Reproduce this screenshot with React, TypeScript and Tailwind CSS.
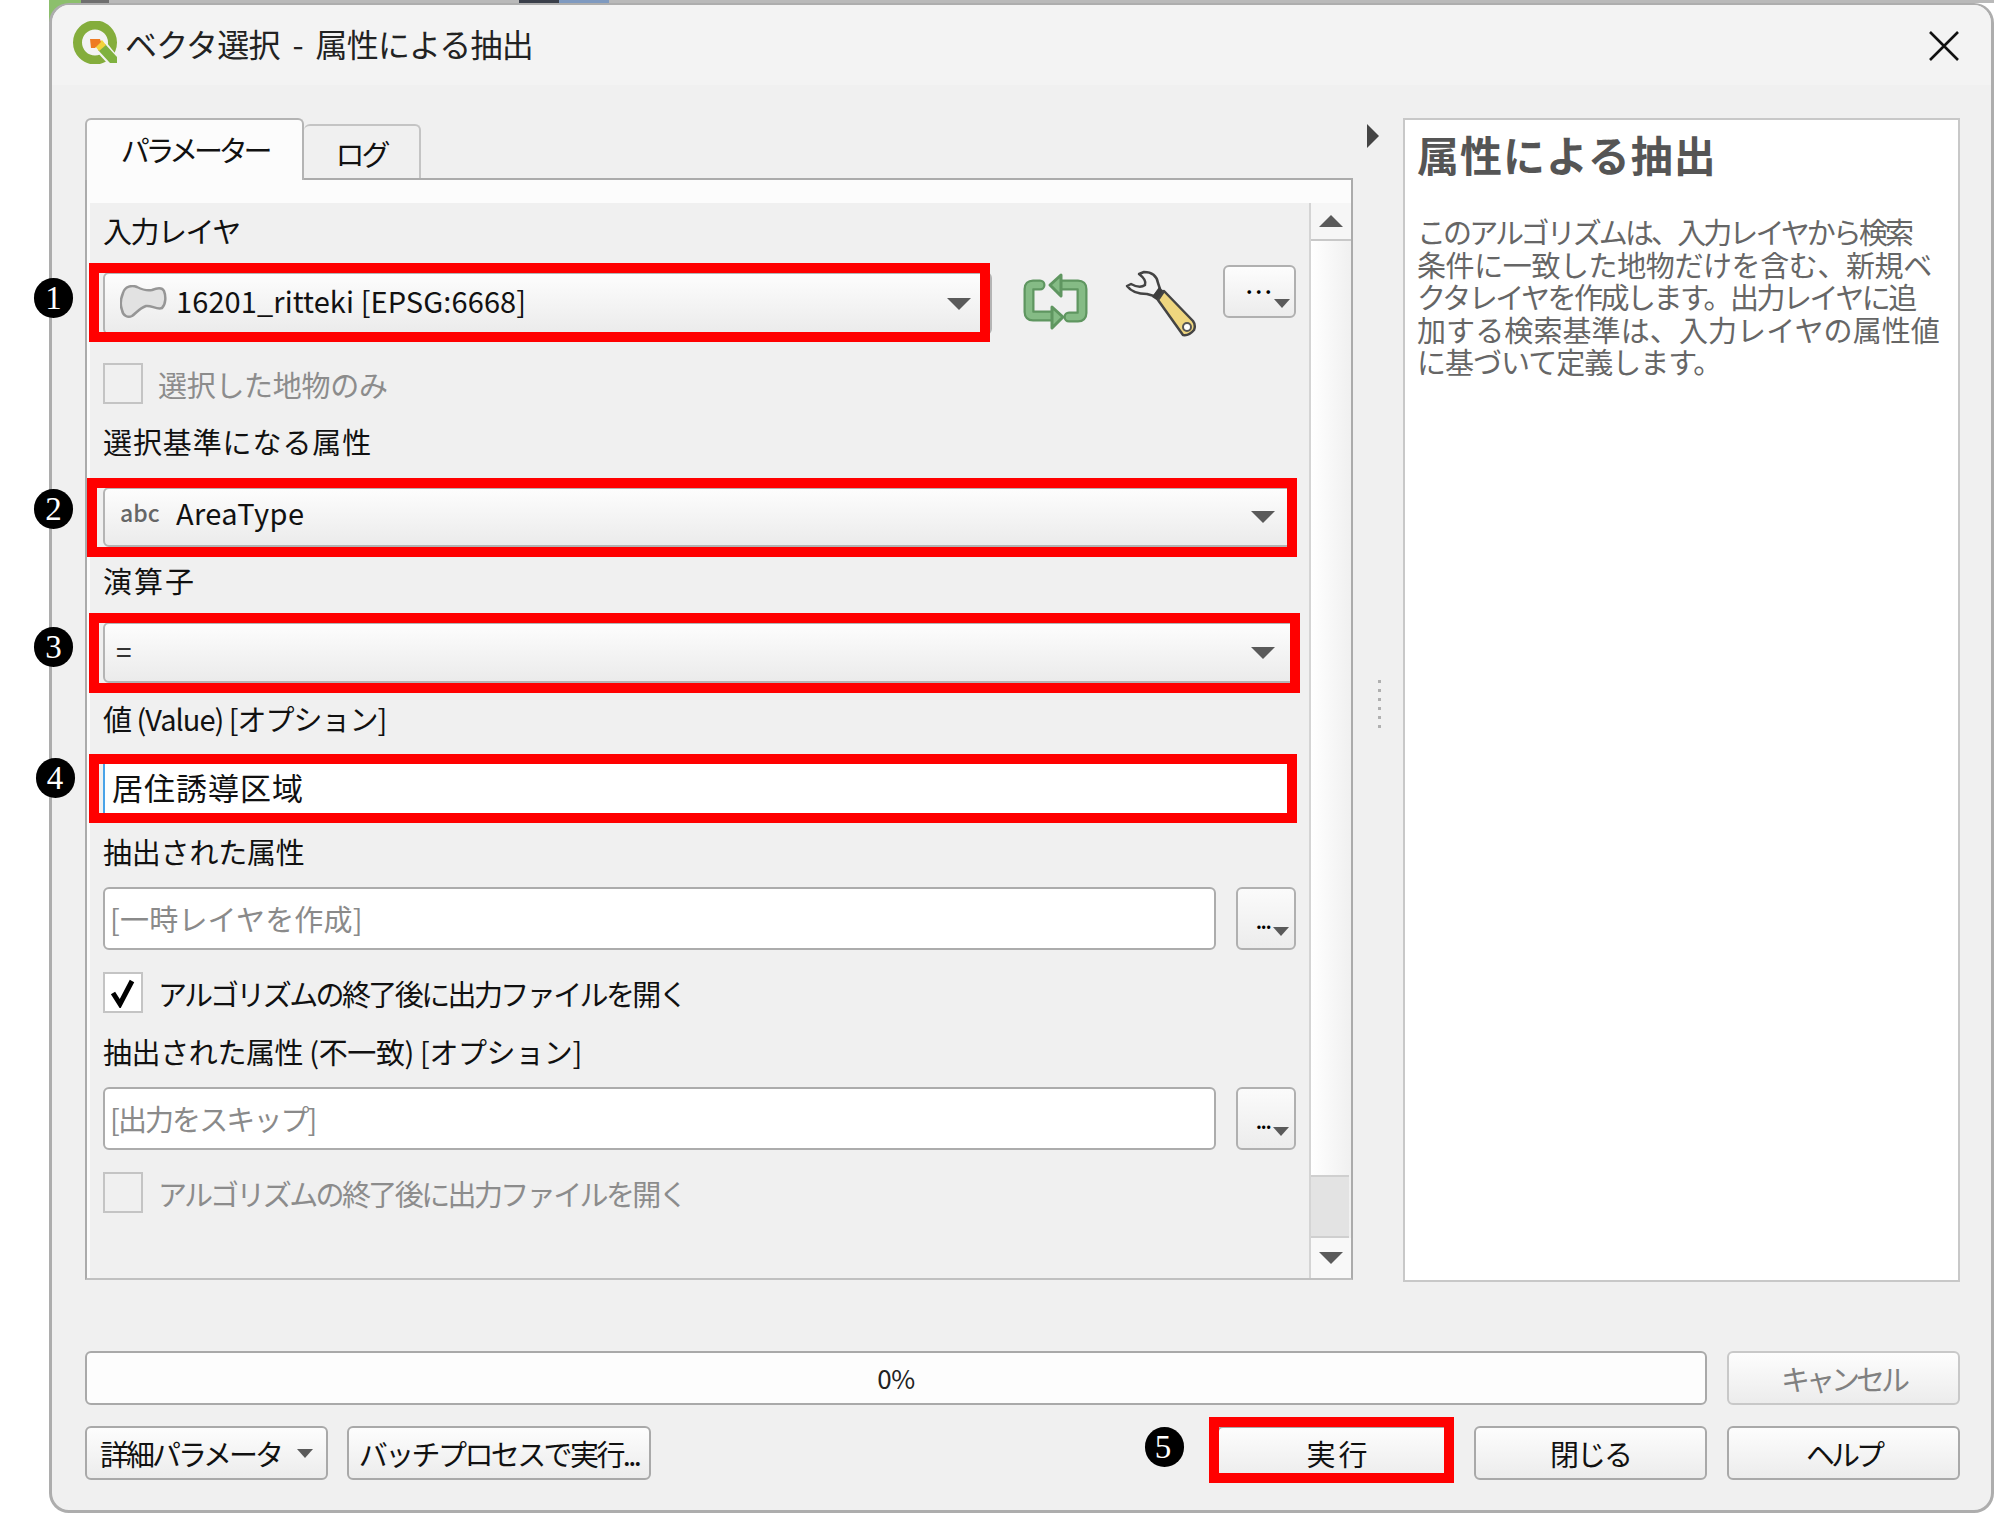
import type { ReactNode } from 'react';

const cjk = "font-['Noto_Sans_CJK_JP','Noto_Sans',sans-serif]";

function Mark({ className }: { className: string }) {
  return <div className={`absolute border-[10px] border-[#ff0000] pointer-events-none ${className}`} />;
}

function Badge({ n, className }: { n: number; className: string }) {
  return (
    <div
      className={`absolute flex h-[40px] w-[39px] items-center justify-center rounded-full bg-black font-['Liberation_Serif',serif] text-[33px] leading-none text-white ${className}`}
    >
      {n}
    </div>
  );
}

function Arrow({ className = 'border-x-[12px] border-t-[12px]' }: { className?: string }) {
  return <span className={`inline-block h-0 w-0 border-x-transparent border-t-[#5a5a5a] ${className}`} />;
}

function Combo({ className, children }: { className: string; children: ReactNode }) {
  return (
    <div
      className={`relative flex items-center justify-between rounded-[6px] border-2 border-[#b4b4b4] bg-linear-to-b from-[#fdfdfd] to-[#ebebeb] pr-[19px] ${className}`}
    >
      {children}
    </div>
  );
}

function Label({ children, className = '' }: { children: ReactNode; className?: string }) {
  return <div className={`h-[36px] text-[29px] leading-[32px] whitespace-nowrap text-[#111] ${className}`}>{children}</div>;
}

function Check({ checked, children, className, textClass }: { checked?: boolean; children: string; className: string; textClass: string }) {
  return (
    <div className={`flex h-[41px] items-center ${className}`}>
      <div
        className={`flex h-[41px] w-[40px] shrink-0 items-center justify-center border-2 border-[#c4c4c4] ${checked ? 'bg-white' : 'bg-[#f0f0f0]'}`}
      >
        {checked && (
          <svg width="26" height="30" viewBox="0 0 26 30">
            <path d="M3 15 L10 26 L22 3" fill="none" stroke="#000" strokeWidth="5" />
          </svg>
        )}
      </div>
      <div className={`ml-[15px] text-[29px] leading-[36px] whitespace-nowrap ${checked ? 'text-[#111]' : 'text-[#8c8c8c]'} ${textClass}`}>
        {children}
      </div>
    </div>
  );
}

function OutputRow({ placeholder, className }: { placeholder: string; className: string }) {
  return (
    <div className={`flex h-[63px] ${className}`}>
      <div className="flex w-[1113px] items-center rounded-[6px] border-2 border-[#acacac] bg-white pl-[5px] text-[29px] text-[#8a8a8a]">
        {placeholder}
      </div>
      <button className="relative ml-[20px] h-[63px] w-[60px] rounded-[6px] border-2 border-[#b0b0b0] bg-linear-to-b from-[#fbfbfb] to-[#ececec]">
        <span className="absolute top-[28px] left-[18px] text-[18px] leading-[8px] font-bold tracking-[-1px] text-black">...</span>
        <span className="absolute right-[5px] bottom-[12px] flex">
          <Arrow className="border-x-[8px] border-t-[9px]" />
        </span>
      </button>
    </div>
  );
}

function Btn({ children, className = '' }: { children: ReactNode; className?: string }) {
  return (
    <button
      className={`relative flex h-[54px] shrink-0 items-center justify-center rounded-[6px] border-2 border-[#a9a9a9] bg-linear-to-b from-[#fdfdfd] to-[#ececec] text-[29px] leading-none text-[#111] ${className}`}
    >
      {children}
    </button>
  );
}

function QgisLogo() {
  return (
    <svg width="47" height="43" viewBox="0 0 47 43" className="-mt-[5px] shrink-0">
      <circle cx="24" cy="21.5" r="17.5" fill="none" stroke="#84ad3c" strokeWidth="9" />
      <path d="M25 19 L36 22 L47 36 L47 43 L37 43 L26 31 Z" fill="#f3f3f3" />
      <path d="M27 29 L34 23 L46 36 L46 42 L39 42 Z" fill="#7fb13f" />
      <path d="M24 25 L31 19 L35 24 L28 30 Z" fill="#f3d23c" />
      <path d="M19 18 L29 18 L30 21 L24 27 L20 27 Z" fill="#ee7b22" />
    </svg>
  );
}

function ReloadIcon() {
  return (
    <svg width="66" height="58" viewBox="0 0 66 58" className="shrink-0">
      <g fill="none" strokeLinecap="round" strokeLinejoin="round">
        <path d="M17 12 H10 Q6 12 6 16 V39 Q6 43 10 43 H30" stroke="#5f9660" strokeWidth="11" />
        <path d="M46 44 H55 Q59 44 59 40 V16 Q59 12 55 12 H36" stroke="#5f9660" strokeWidth="11" />
        <path d="M17 12 H10 Q6 12 6 16 V39 Q6 43 10 43 H30" stroke="#85bb85" strokeWidth="6.5" />
        <path d="M46 44 H55 Q59 44 59 40 V16 Q59 12 55 12 H36" stroke="#85bb85" strokeWidth="6.5" />
      </g>
      <path d="M29 34 L40 44 L29 55 Z" fill="#85bb85" stroke="#5f9660" strokeWidth="3" strokeLinejoin="round" />
      <path d="M38 2 L27 12 L38 23 Z" fill="#85bb85" stroke="#5f9660" strokeWidth="3" strokeLinejoin="round" />
    </svg>
  );
}

function WrenchIcon() {
  return (
    <svg width="72" height="67" viewBox="0 0 72 67" className="shrink-0">
      <path
        d="M19 2 Q31 2 33 13 L35 19 L29 26 L22 24 Q8 24 2 16 L6 14 Q15 19 20 15 Q22 10 14 4 Z"
        fill="#f2f2f2"
        stroke="#444"
        strokeWidth="2.5"
        strokeLinejoin="round"
      />
      <path d="M34 17 L27 27 L33 31 L40 22 Z" fill="#3d3d3d" />
      <path d="M39 21 L33 30 L58 65 Q64 66 69 60 Q71 55 68 51 Z" fill="#efd67f" stroke="#444" strokeWidth="2.5" strokeLinejoin="round" />
      <circle cx="62" cy="57" r="4" fill="#fff" stroke="#555" strokeWidth="2" />
    </svg>
  );
}

function LayerIcon() {
  return (
    <svg width="47" height="34" viewBox="0 0 47 34" className="-mt-[3px] shrink-0">
      <path
        d="M3 8 C5 1 12 0 17 2 C23 5 27 6 32 5 C37 3 42 2 44 6 C46 11 46 19 42 23 C37 25 31 20 26 21 C20 23 16 28 12 31 C8 33 3 31 2 25 C0 20 1 13 3 8 Z"
        fill="#e2e2e2"
        stroke="#969696"
        strokeWidth="2.5"
        strokeLinejoin="round"
      />
    </svg>
  );
}

export default function App() {
  return (
    <div className={`h-[1515px] w-[1995px] overflow-hidden bg-white ${cjk}`}>
      {/* map behind the dialog */}
      <div className="ml-[49px] flex h-[3px] w-[1945px] bg-[#b9b9b9]">
        <div className="h-[22px] w-[32px] bg-[#8cbf6c]" />
        <div className="w-[28px] bg-[#6f6f6f]" />
        <div className="ml-[410px] w-[40px] bg-[#3a3f4a]" />
        <div className="w-[50px] bg-[#7f9ac0]" />
      </div>

      <div className="relative ml-[49px] flex h-[1510px] w-[1945px] flex-col rounded-[20px] border-[3px] border-t-2 border-[#adadad] bg-[#f0f0f0]">
        {/* title bar */}
        <div className="flex h-[80px] shrink-0 items-center rounded-t-[18px] bg-[#f3f3f3] pr-[31px] pl-[19px]">
          <QgisLogo />
          <div className="-mt-[4px] ml-[7px] text-[32px] leading-none tracking-[-0.8px] whitespace-pre text-[#222]">ベクタ選択  -  属性による抽出</div>
          <svg width="32" height="32" viewBox="0 0 32 32" className="mt-[2px] ml-auto">
            <path d="M2 2 L30 30 M30 2 L2 30" stroke="#111" strokeWidth="2.6" />
          </svg>
        </div>

        <div className="flex flex-1 flex-col pr-[31px] pl-[33px]">
          <div className="mt-[33px] flex h-[1164px]">
            {/* parameters */}
            <div className="flex w-[1268px] shrink-0 flex-col">
              <div className="flex h-[60px] items-end">
                <div className="z-10 -mb-[2px] flex h-[62px] w-[219px] items-center justify-center rounded-t-[6px] border-2 border-b-0 border-[#b4b4b4] bg-[#fcfcfc] text-[29px] tracking-[-4.3px] text-[#111]">
                  パラメーター
                </div>
                <div className="flex h-[54px] w-[117px] items-center justify-center rounded-t-[6px] border-2 border-b-0 border-l-0 border-[#c4c4c4] bg-[#f0f0f0] pt-[4px] text-[29px] tracking-[-3px] text-[#111]">
                  ログ
                </div>
              </div>
              <div className="flex h-[1102px] border-2 border-[#ababab] border-b-[#c0c0c0] bg-[#fcfcfc] pl-[3px]">
                <div className="mt-[23px] flex w-[1219px] flex-col bg-[#f0f0f0] pr-[13px] pl-[13px]">
                  <Label className="mt-[11px] tracking-[-1.5px]">入力レイヤ</Label>

                  <div className="mt-[15px] flex h-[72px]">
                    <Combo className="mt-[7px] h-[63px] w-[889px]">
                      <div className="flex items-center pl-[15px]">
                        <LayerIcon />
                        <span className="-mt-[5px] ml-[9px] text-[29px] tracking-[0.1px] text-[#111]">16201_ritteki [EPSG:6668]</span>
                      </div>
                      <Arrow />
                      <Mark className="-top-[11px] right-0 -bottom-[9px] -left-[16px]" />
                      <Badge n={1} className="top-[4px] -left-[71px]" />
                    </Combo>
                    <div className="mt-[8px] ml-[31px]">
                      <ReloadIcon />
                    </div>
                    <div className="mt-[5px] ml-[36px]">
                      <WrenchIcon />
                    </div>
                    <button className="relative ml-[26px] h-[53px] w-[73px] rounded-[6px] border-2 border-[#b0b0b0] bg-linear-to-b from-[#fdfdfd] to-[#ececec]">
                      <span className="absolute top-[14px] left-[21px] text-[20px] leading-[10px] font-bold tracking-[3px] text-black">...</span>
                      <span className="absolute right-[4px] bottom-[8px] flex">
                        <Arrow className="border-x-[8px] border-t-[9px]" />
                      </span>
                    </button>
                  </div>

                  <Check className="mt-[26px]" textClass="tracking-[-0.3px]">選択した地物のみ</Check>

                  <Label className="mt-[21px] tracking-[0.9px]">選択基準になる属性</Label>
                  <Combo className="mt-[26px] h-[60px] w-[1193px]">
                    <div className="-mt-[9px] flex items-center pl-[15px]">
                      <span className="w-[56px] text-[23px] font-medium text-[#666]">abc</span>
                      <span className="text-[29px] tracking-[0.4px] text-[#111]">AreaType</span>
                    </div>
                    <Arrow />
                    <Mark className="-top-[11px] -right-[3px] -bottom-[12px] -left-[18px]" />
                    <Badge n={2} className="-left-[71px] top-0" />
                  </Combo>

                  <Label className="mt-[17px] tracking-[2px]">演算子</Label>
                  <Combo className="mt-[22px] h-[61px] w-[1193px]">
                    <span className="-mt-[3px] pl-[11px] text-[28px] text-[#333]">=</span>
                    <Arrow />
                    <Mark className="-top-[11px] -right-[6px] -bottom-[12px] -left-[16px]" />
                    <Badge n={3} className="top-[3px] -left-[71px]" />
                  </Combo>

                  <Label className="mt-[19px] tracking-[-1px]">値 (Value) [オプション]</Label>
                  <div className="relative mt-[25px] flex h-[50px] w-[1193px] items-center border-l-2 border-[#4aa3e8] bg-white pl-[7px] text-[31px] tracking-[1px] text-[#111]">
                    <span className="-mt-[2px]">居住誘導区域</span>
                    <Mark className="-top-[9px] -right-[1px] -bottom-[10px] -left-[16px]" />
                    <Badge n={4} className="-top-[5px] -left-[69px]" />
                  </div>

                  <Label className="mt-[22px] tracking-[-0.2px]">抽出された属性</Label>
                  <OutputRow className="mt-[16px] tracking-[0.2px]" placeholder="[一時レイヤを作成]" />
                  <Check checked className="mt-[22px]" textClass="tracking-[-2.6px]">アルゴリズムの終了後に出力ファイルを開く</Check>
                  <Label className="mt-[22px] tracking-[-0.4px]">抽出された属性 (不一致) [オプション]</Label>
                  <OutputRow className="mt-[16px] tracking-[-1.9px]" placeholder="[出力をスキップ]" />
                  <Check className="mt-[22px]" textClass="tracking-[-2.6px]">アルゴリズムの終了後に出力ファイルを開く</Check>
                </div>

                {/* scroll bar */}
                <div className="mt-[23px] flex w-[42px] flex-col border-l-2 border-[#d4d4d4] bg-linear-to-r from-[#ffffff] to-[#f0f0f0]">
                  <div className="flex h-[38px] items-center justify-center border-b-2 border-[#c8c8c8] bg-[#f6f6f6]">
                    <span className="h-0 w-0 border-x-[12px] border-b-[12px] border-x-transparent border-b-[#5a5a5a]" />
                  </div>
                  <div className="flex-1" />
                  <div className="mr-[2px] h-[63px] border-y-2 border-[#cfcfcf] bg-[#e3e3e3]" />
                  <div className="flex h-[40px] items-center justify-center bg-[#f8f8f8]">
                    <Arrow />
                  </div>
                </div>
              </div>
            </div>

            {/* collapse handle */}
            <div className="flex w-[50px] shrink-0 flex-col items-center">
              <span className="mt-[6px] -ml-[10px] h-0 w-0 border-y-[12px] border-l-[12px] border-y-transparent border-l-[#444]" />
              <div className="mt-[532px] ml-[2px] flex flex-col gap-[6px]">
                {[0, 1, 2, 3, 4, 5].map((i) => (
                  <span key={i} className="h-[3px] w-[3px] bg-[#b0b0b0]" />
                ))}
              </div>
            </div>

            {/* help */}
            <div className="h-[1164px] w-[557px] shrink-0 border-2 border-[#c8c8c8] bg-white pt-[6px] pl-[12px]">
              <div className="text-[42px] leading-[56px] font-bold tracking-[1px] text-[#555]">属性による抽出</div>
              <div className="mt-[33px] text-[29px] leading-[32.5px] whitespace-nowrap text-[#666]">
                <div className="tracking-[-2.9px]">このアルゴリズムは、入力レイヤから検索</div>
                <div className="tracking-[-0.4px]">条件に一致した地物だけを含む、新規ベ</div>
                <div className="tracking-[-2.5px]">クタレイヤを作成します。出力レイヤに追</div>
                <div className="tracking-[0.1px]">加する検索基準は、入力レイヤの属性値</div>
                <div className="tracking-[-1px]">に基づいて定義します。</div>
              </div>
            </div>
          </div>

          {/* progress */}
          <div className="mt-[69px] flex h-[54px]">
            <div className="flex w-[1622px] shrink-0 items-center justify-center rounded-[6px] border-2 border-[#a9a9a9] bg-[#fdfdfd] text-[26px] leading-none tracking-[-0.5px] text-[#222]">
              0%
            </div>
            <Btn className="ml-[20px] w-[233px] border-[#c8c8c8] tracking-[-4px] text-[#808080]">キャンセル</Btn>
          </div>

          {/* buttons */}
          <div className="mt-[21px] flex">
            <Btn className="w-[243px] tracking-[-3px]">
              詳細パラメータ
              <span className="ml-[16px] flex">
                <Arrow className="border-x-[8px] border-t-[9px]" />
              </span>
            </Btn>
            <Btn className="ml-[19px] w-[304px] tracking-[-2.6px] whitespace-nowrap">バッチプロセスで実行...</Btn>
            <Btn className="ml-[566px] w-[237px] border-[#58b2f2] to-[#e7ebf0] pl-[6px] tracking-[3px]">
              実行
              <Mark className="-top-[11px] -right-[2px] -bottom-[5px] -left-[10px]" />
              <Badge n={5} className="-top-[1px] -left-[74px]" />
            </Btn>
            <Btn className="ml-[20px] w-[233px] tracking-[-2px]">閉じる</Btn>
            <Btn className="ml-[20px] w-[233px] tracking-[-4px]">ヘルプ</Btn>
          </div>
        </div>
      </div>
    </div>
  );
}
